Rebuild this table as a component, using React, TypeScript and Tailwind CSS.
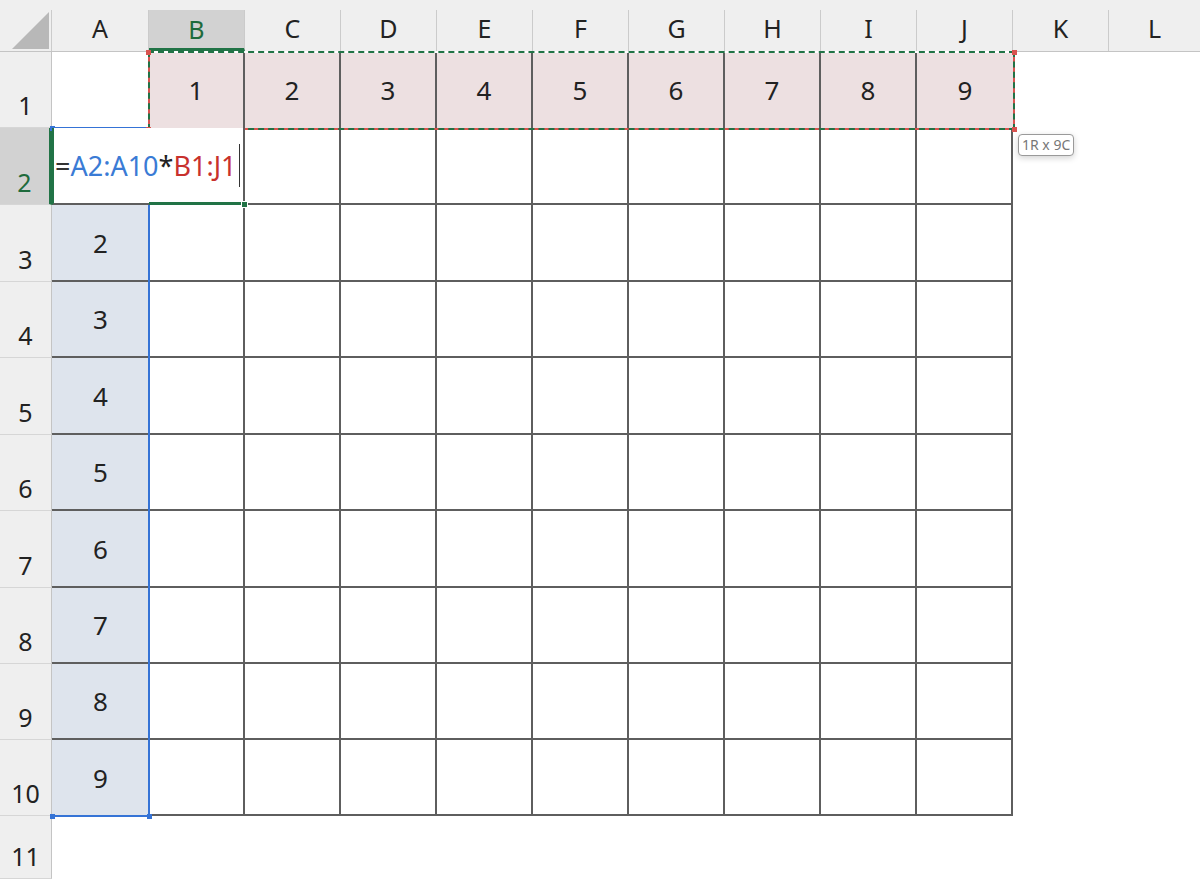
import React from "react";

const COLS = ["A", "B", "C", "D", "E", "F", "G", "H", "I", "J", "K", "L"];
const GRID = "border-[#5e5e5e]";

function ColHeader({ letter, selected, last }: { letter: string; selected: boolean; last: boolean }) {
  return (
    <div className="flex flex-col bg-[#efefef] border-b border-[#c4c4c4] pt-[10px]">
      <div
        className={
          "flex-1 flex items-center justify-center text-[25px] leading-none " +
          (last ? "" : "border-r border-[#cbcbcb] ") +
          (selected
            ? "bg-[#d2d2d2] text-[#1e6b3c] border-b-[3px] border-b-[#217346] pt-[1px]"
            : "text-[#222] pb-[4px]")
        }
      >
        {letter}
      </div>
    </div>
  );
}

function RowHeader({ n, selected }: { n: number; selected?: boolean }) {
  return (
    <div
      className={
        "flex items-end justify-center pb-[9px] text-[25px] leading-none border-b border-[#d6d6d6] " +
        (selected
          ? "bg-[#d2d2d2] text-[#1e6b3c] border-r-[3px] border-r-[#217346]"
          : "bg-[#efefef] text-[#222] border-r border-r-[#c4c4c4]")
      }
    >
      {n}
    </div>
  );
}

function Handle({ pos, color }: { pos: string; color: string }) {
  return <div className={"absolute w-[5px] h-[5px] " + pos + " " + color} />;
}

export default function App() {
  const cells: React.ReactNode[] = [];

  // header row
  cells.push(
    <div key="corner" className="bg-[#efefef] border-b border-[#c4c4c4] flex flex-col pt-[10px]">
      <div className="flex-1 border-r border-[#cbcbcb] flex items-end justify-end pr-[2px] pb-[2px]">
        <svg width="37" height="37" viewBox="0 0 37 37">
          <polygon points="37,0 37,37 0,37" fill="#b8b8b8" />
        </svg>
      </div>
    </div>
  );
  COLS.forEach((c, i) =>
    cells.push(<ColHeader key={"h" + c} letter={c} selected={c === "B"} last={i === COLS.length - 1} />)
  );

  // row 1
  cells.push(<RowHeader key="r1" n={1} />);
  cells.push(<div key="A1" className="bg-white" />);
  for (let i = 1; i <= 9; i++) {
    cells.push(
      <div
        key={"r1c" + i}
        className={
          "bg-[#ede0e1] flex items-center justify-center text-[26px] leading-none text-[#222] " +
          (i < 9 ? "border-r-2 " + GRID : "")
        }
      >
        {i}
      </div>
    );
  }
  cells.push(<div key="K1" className="bg-white" />);
  cells.push(<div key="L1" className="bg-white" />);

  // row 2
  cells.push(<RowHeader key="r2" n={2} selected />);
  cells.push(
    <div
      key="edit"
      className="col-span-2 relative z-10 bg-white border-l-2 border-l-[#217346] border-b-2 border-b-[#5e5e5e] border-r-2 border-r-[#5e5e5e] flex items-center pl-[1px] text-[27px] leading-none"
    >
      <span className="text-[#333]">=</span>
      <span className="text-[#3a7bd5]">A2:A10</span>
      <span className="text-[#222]">*</span>
      <span className="text-[#c8312d]">B1:J1</span>
      <span className="inline-block w-[1px] h-[43px] bg-[#333] ml-[3px]" />
      <div className="absolute left-[95px] right-0 bottom-[-2px] h-[3px] bg-[#217346]" />
      <div className="absolute right-[-5px] bottom-[-5px] w-[7px] h-[7px] bg-[#217346] border border-white" />
    </div>
  );
  for (let i = 2; i <= 9; i++) {
    cells.push(<div key={"r2c" + i} className={"bg-white border-b-2 border-r-2 " + GRID} />);
  }
  cells.push(<div key="K2" className="bg-white" />);
  cells.push(<div key="L2" className="bg-white" />);

  // rows 3-10
  for (let r = 3; r <= 10; r++) {
    cells.push(<RowHeader key={"r" + r} n={r} />);
    cells.push(
      <div
        key={"A" + r}
        className={
          "bg-[#dee4ed] flex items-center justify-center text-[26px] leading-none text-[#222] " +
          (r < 10 ? "border-b-2 " + GRID : "")
        }
      >
        {r - 1}
      </div>
    );
    for (let i = 1; i <= 9; i++) {
      cells.push(<div key={"r" + r + "c" + i} className={"bg-white border-r-2 border-b-2 " + GRID} />);
    }
    cells.push(<div key={"K" + r} className="bg-white" />);
    cells.push(<div key={"L" + r} className="bg-white" />);
  }

  // row 11
  cells.push(<RowHeader key="r11" n={11} />);
  for (let i = 0; i < 12; i++) cells.push(<div key={"r11c" + i} className="bg-white" />);

  return (
    <div
      className="relative w-[1200px] h-[879px] overflow-hidden bg-white"
      style={{ fontFamily: '"Noto Sans", "Noto Sans CJK JP", sans-serif' }}
    >
      <div className="grid h-full grid-cols-[52px_97px_repeat(10,96px)_1fr] grid-rows-[52px_76px_77px_77px_76px_77px_76px_77px_76px_76px_76px_1fr]">
        {cells}
      </div>

      {/* A2:A10 reference highlight (blue) */}
      <div className="absolute left-[52px] top-[127px] w-[98px] h-[690px] border-t-2 border-r-2 border-b-2 border-[#3573d6]">
        <Handle pos="-left-[2px] -top-[3px]" color="bg-[#3573d6]" />
        <Handle pos="-left-[2px] -bottom-[4px]" color="bg-[#3573d6]" />
        <Handle pos="-right-[4px] -bottom-[4px]" color="bg-[#3573d6]" />
      </div>

      {/* B1:J1 reference highlight (red + green dashed) */}
      <div className="absolute left-[148px] top-[51px] w-[867px] h-[79px] border-2 border-[#d9534f] border-t-white">
        <div className="absolute -inset-[2px] border-2 border-dashed border-[#217346]" />
        <Handle pos="-left-[4px] -top-[3px]" color="bg-[#d9534f]" />
        <Handle pos="-right-[4px] -top-[3px]" color="bg-[#d9534f]" />
        <Handle pos="-left-[4px] -bottom-[4px]" color="bg-[#d9534f]" />
        <Handle pos="-right-[4px] -bottom-[4px]" color="bg-[#d9534f]" />
        {/* size tooltip */}
        <div className="absolute left-[868px] top-[81px] h-[22px] px-[3px] flex items-center bg-white border border-[#9a9a9a] rounded-[4px] text-[14px] leading-none text-[#777] whitespace-nowrap shadow-[0_2px_6px_rgba(0,0,0,0.18)]">
          1R x 9C
        </div>
      </div>
    </div>
  );
}
